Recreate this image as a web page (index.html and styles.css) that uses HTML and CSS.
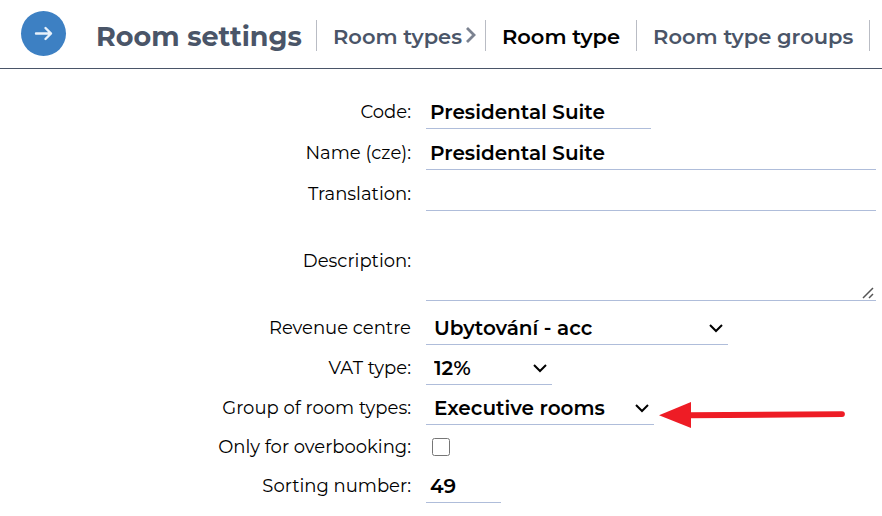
FILE: index.html
```html
<!DOCTYPE html>
<html lang="en">
<head>
  <meta charset="utf-8">
  <meta name="viewport" content="width=device-width, initial-scale=1">
  <title>Room settings</title>
  <link rel="stylesheet" href="styles.css">
</head>
<body>
  <header class="topbar">
    <button class="menu-button" type="button" aria-label="Open menu">
      <svg width="45" height="45" viewBox="0 0 45 45" fill="none" stroke="currentColor" stroke-width="2.4" stroke-linecap="round" stroke-linejoin="round" aria-hidden="true">
        <path d="M15 22.5H30M24.5 17L30 22.5L24.5 28"/>
      </svg>
    </button>
    <h1 class="title">Room settings</h1>
    <nav class="tabs">
      <a class="tab tab-parent" href="#types">Room types
        <svg class="tab-arrow" width="10" height="16" viewBox="0 0 10 16" fill="none" stroke="currentColor" stroke-width="2.8" aria-hidden="true">
          <path d="M1 1L8 8L1 15"/>
        </svg>
      </a>
      <a class="tab tab-current" href="#type" aria-current="page">Room type</a>
      <a class="tab tab-last" href="#groups">Room type groups</a>
    </nav>
  </header>

  <main>
    <form class="form">
      <label for="code">Code:</label>
      <input class="field field-medium" id="code" type="text" value="Presidental Suite">

      <label for="name">Name (cze):</label>
      <input class="field" id="name" type="text" value="Presidental Suite">

      <label for="translation">Translation:</label>
      <input class="field" id="translation" type="text">

      <label for="description">Description:</label>
      <div class="area">
        <textarea class="field field-area" id="description"></textarea>
        <svg class="grip" width="14" height="14" viewBox="0 0 14 14" aria-hidden="true"><path d="M1 12L11 2M7 12L11 8"/></svg>
      </div>

      <label for="revenue">Revenue centre</label>
      <div class="picker picker-wide">
        <select class="field field-select" id="revenue"><option>Ubytování - acc</option></select>
        <svg class="caret" width="16" height="10" viewBox="0 0 16 10" aria-hidden="true"><path d="M2 2L8 8L14 2"/></svg>
      </div>

      <label for="vat">VAT type:</label>
      <div class="picker picker-narrow">
        <select class="field field-select" id="vat"><option>12%</option></select>
        <svg class="caret" width="16" height="10" viewBox="0 0 16 10" aria-hidden="true"><path d="M2 2L8 8L14 2"/></svg>
      </div>

      <label for="group">Group of room types:</label>
      <div class="picker picker-medium">
        <select class="field field-select" id="group"><option>Executive rooms</option></select>
        <svg class="caret" width="16" height="10" viewBox="0 0 16 10" aria-hidden="true"><path d="M2 2L8 8L14 2"/></svg>
        <svg class="pointer" width="188" height="28" viewBox="0 0 188 28" aria-hidden="true">
          <path d="M0 14.3L32 1V27Z"/>
          <path d="M31 11.3L183 10.2A2.9 2.9 0 0 1 183 16L31 17.3Z"/>
        </svg>
      </div>

      <label for="overbooking">Only for overbooking:</label>
      <div class="check-row"><input class="check" id="overbooking" type="checkbox"></div>

      <label for="sorting">Sorting number:</label>
      <input class="field field-short" id="sorting" type="text" inputmode="numeric" value="49">
    </form>
  </main>
</body>
</html>
```
FILE: styles.css
```css
* {
  box-sizing: border-box;
}

body {
  margin: 0;
  background: #fff;
  color: #000;
  font-family: Montserrat, Inter, sans-serif;
  font-size: 18px;
}

.topbar {
  display: flex;
  align-items: center;
  padding: 11px 12px 12px 21px;
  border-bottom: 1px solid #4a5568;
  color: #4a5568;
}

.menu-button {
  display: flex;
  flex: none;
  width: 45px;
  height: 45px;
  padding: 0;
  border: 0;
  border-radius: 50%;
  background: #3d80c3;
  color: #e8f1fb;
}

.title {
  flex: none;
  width: 220px;
  margin: 6px 0 0 30px;
  font-size: 27px;
  line-height: 36px;
  font-weight: 700;
  white-space: nowrap;
}

.tabs {
  display: flex;
  flex: 1;
  margin-top: 3px;
}

.tab {
  display: flex;
  align-items: center;
  height: 31px;
  padding: 3px 16px 0;
  border-left: 1px solid #b9bcc4;
  color: #4a5568;
  font-size: 21px;
  font-weight: 600;
  text-decoration: none;
  white-space: nowrap;
}

.tab-parent {
  gap: 4px;
  padding-right: 9px;
}

.tab-arrow {
  margin-bottom: 3px;
  color: #7b8290;
}

.tab-current {
  color: #000;
}

.tab-last {
  border-right: 1px solid #b9bcc4;
}

.form {
  display: grid;
  grid-template-columns: 411fr 450fr;
  gap: 6px 15px;
  align-items: center;
  padding: 25px 6px 13px 0;
}

label {
  text-align: right;
}

.field {
  display: block;
  width: 100%;
  height: 35px;
  margin: 0;
  padding: 1px 4px 0;
  border: 0;
  border-bottom: 1px solid #afbdda;
  border-radius: 0;
  outline: 0;
  background: transparent;
  color: #000;
  font: inherit;
  font-size: 20px;
  font-weight: 650;
}

.field-medium {
  width: 225px;
}

.field-short {
  width: 75px;
}

.area {
  position: relative;
  margin: 4px 0;
}

.field-area {
  height: 80px;
  resize: none;
}

.grip {
  position: absolute;
  right: 0;
  bottom: 1px;
  fill: none;
  stroke: #555;
  stroke-width: 1.5;
  pointer-events: none;
}

.field-select {
  height: 34px;
  padding: 0 8px;
  appearance: none;
}

.picker {
  position: relative;
}

.picker-wide {
  width: 302px;
}

.picker-medium {
  width: 228px;
}

.picker-narrow {
  width: 126px;
}

.caret {
  position: absolute;
  top: 12px;
  right: 4px;
  fill: none;
  stroke: #000;
  stroke-width: 2;
  pointer-events: none;
}

.pointer {
  position: absolute;
  top: 10px;
  left: calc(100% + 5px);
  fill: #ee1c25;
}

.check-row {
  display: flex;
  align-items: center;
  height: 31px;
  padding-left: 6px;
}

.check {
  width: 18px;
  height: 18px;
  margin: 0;
}
```
